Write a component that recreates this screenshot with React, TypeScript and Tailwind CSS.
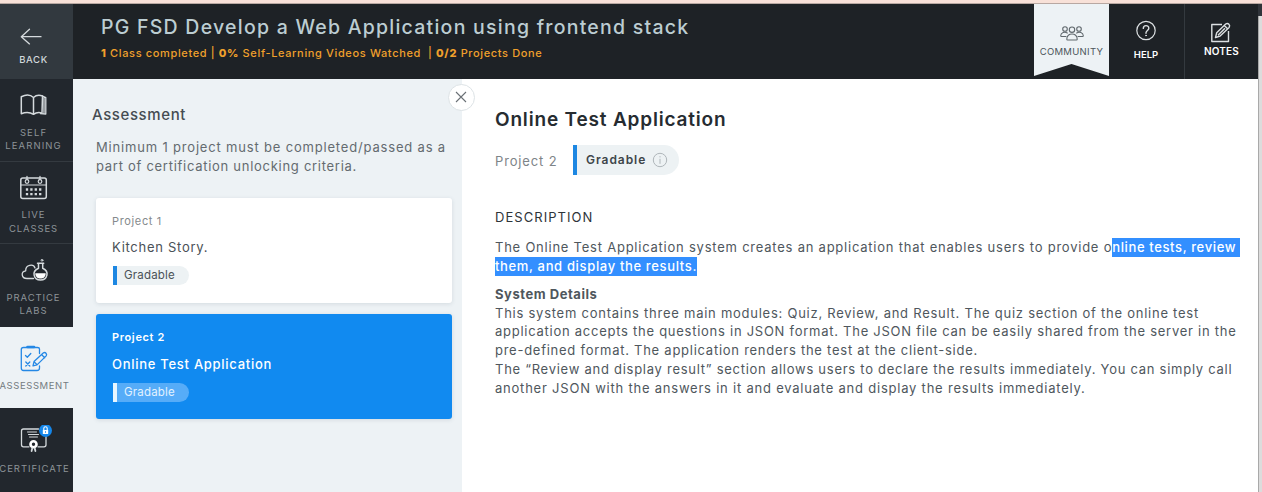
import type { ReactNode } from "react";

function NavIcon({ box, children, className = "text-[#d5dadd]" }: { box: string; children: ReactNode; className?: string }) {
  return (
    <svg viewBox={box} className={`ml-[17px] block h-7 w-9 shrink-0 self-start ${className}`} fill="none" stroke="currentColor" strokeWidth="1.3" strokeLinecap="round" strokeLinejoin="round">
      {children}
    </svg>
  );
}

function Sidebar() {
  const item = "flex w-[73px] shrink-0 flex-col";
  const label = "w-[67px] text-center text-[9.5px] text-[#8d9498]";
  return (
    <nav className="flex w-[73px] shrink-0 flex-col bg-[#22272d]">
      <div className={`${item} h-[75px] bg-[#32393f] pt-[19px]`}>
        <NavIcon box="17 23 36 28">
          <path d="M21.5 36.7H41M29.5 29.3L21.3 36.7l8.2 7.2" />
        </NavIcon>
        <span className="mt-0.5 w-[67px] text-center text-[9.5px] leading-[13px] font-medium tracking-[0.6px] text-[#d3dadd]">BACK</span>
      </div>
      <div className={`${item} h-[83px] border-b border-[#343a40] pt-3`}>
        <NavIcon box="17 91 36 28">
          <path d="M33.500 97.500c-3-2.800-8-2.800-12.200-.8v17c4-1.500 8.700-1.500 12.200.6 3-2.100 5.500-2.100 8.500-1.200M33.500 97.500c2.500-2.300 5.500-2.700 9-1.500l-.5 17M33.500 97.500v16.800" strokeWidth="1.500" />
          <path d="M42.500 96l3.300 1.700v16.300l-5.300-.3M44 97v15.500" />
        </NavIcon>
        <span className={`${label} mt-[7px] leading-[13px] tracking-[1.1px]`}>SELF<br />LEARNING</span>
      </div>
      <div className={`${item} h-[82px] border-b border-[#343a40] pt-3`}>
        <NavIcon box="17 174 36 28">
          <rect x="20.800" y="178" width="25.500" height="20.500" rx="2" strokeWidth="1.500" />
          <path d="M21 185h25" strokeWidth="1" />
          <path d="M27 176.500v3M40 176.500v3" />
          <circle cx="27" cy="181.500" r="1.800" strokeWidth="1.200" />
          <circle cx="40" cy="181.500" r="1.800" strokeWidth="1.200" />
          <path d="M27 189.500h.01M31.400 189.500h.01M35.800 189.500h.01M40.200 189.500h.01M27 194.200h.01M31.400 194.200h.01M35.800 194.200h.01M40.200 194.200h.01" strokeWidth="2.300" strokeLinecap="square" />
        </NavIcon>
        <span className={`${label} mt-1.5 leading-[14px] tracking-[0.9px]`}>LIVE<br />CLASSES</span>
      </div>
      <div className={`${item} h-[83px] pt-[11px]`}>
        <NavIcon box="17 255 36 28">
          <path d="M33.500 278.500h-6.500c-6 0-6.300-7-1.300-7.700C25.500 264.500 33.500 263.500 35 268" />
          <path d="M37.500 263.200h6.200M38.500 263.500v4.700c-7.500 3.300-4.700 11.800 2 11.800s9.500-8.500 2.200-11.800v-4.700" strokeWidth="1.500" />
          <path d="M35.300 273.200h10.400c.3 7.200-10.700 7.200-10.400 0z" fill="#fff" stroke="none" />
          <circle cx="42" cy="260.300" r=".9" strokeWidth="1" />
        </NavIcon>
        <span className={`${label} mt-2 leading-[13px] tracking-[0.9px]`}>PRACTICE<br />LABS</span>
      </div>
      <div className={`${item} h-[81px] bg-[#edf2f5] pt-[17px]`}>
        <NavIcon box="17 344 36 28" className="text-[#2488e5]">
          <path d="M39.500 353.500v-4.500q0-1.500-2-1.500H23.500q-2.200 0-2.200 2v18.500q0 2.500 2.200 2.500h13.500q2.500 0 2.500-2.500v-2" />
          <path d="M27.500 347h6.500" strokeWidth="2.600" />
          <path d="M25.500 355.500l1.800 1.800 3.500-3.800M25.800 362l4 4M29.800 362l-4 4" />
          <path d="M33 365.800l1-4.200 9.500-8.800q1.400-.8 2.500.4t.2 2.700l-9.200 9-4 .9zM41.500 354.500l3.200 3.200M34 361.600l3 3.200" />
        </NavIcon>
        <span className="-ml-[2px] w-[73px] shrink-0 pt-[7px] text-center text-[9.5px] leading-[13px] tracking-[0.6px] whitespace-nowrap text-[#747c81]">ASSESSMENT</span>
      </div>
      <div className={`${item} grow pt-[17px]`}>
        <NavIcon box="17 425 36 28">
          <path d="M29 446.800h-5.500q-2 0-2-2V431q0-2 2-2h15M46 436.500v8.300q0 2-2 2h-6" />
          <path d="M27.500 432h9M28.500 434.500h10M29.500 437h8" strokeWidth="1" />
          <circle cx="33.500" cy="444.300" r="3" fill="#22272d" strokeWidth="2.600" stroke="#fff" />
          <path d="M32.200 448.500l-.6 2.500M34.800 448.500l.6 2.500" strokeWidth="1.800" />
          <circle cx="45.500" cy="430.500" r="6.500" fill="#1587ea" stroke="none" />
          <rect x="42.800" y="430" width="5.400" height="4" rx=".5" fill="#fff" stroke="none" />
          <path d="M43.800 430v-1.500q0-1.700 1.700-1.700t1.700 1.700v1.500" stroke="#fff" strokeWidth="1.100" />
          <path d="M45.500 431.500v1" stroke="#1587ea" strokeWidth=".8" />
        </NavIcon>
        <span className="-ml-[2px] w-[73px] shrink-0 pt-[9px] text-center text-[9.5px] leading-[13px] tracking-[0.95px] whitespace-nowrap text-[#8d9498]">CERTIFICATE</span>
      </div>
    </nav>
  );
}

function Header() {
  return (
    <header className="flex h-[75px] shrink-0 bg-[#1e2226]">
      <div className="grow pl-7 whitespace-nowrap">
        <h1 className="pt-[9px] text-[19.5px] leading-[28px] font-medium tracking-[1.24px] text-[#bccdd2]">PG FSD Develop a Web Application using frontend stack</h1>
        <p className="mt-1 text-[11px] leading-4 font-medium tracking-[0.64px] whitespace-pre text-[#f0a02c]">
          <b className="font-extrabold">1</b> Class completed | <b className="font-extrabold">0%</b> Self-Learning Videos Watched{"  "}| <b className="font-extrabold">0/2</b> Projects Done
        </p>
      </div>
      <div className="flex h-[72px] w-[75px] shrink-0 flex-col items-center bg-[#edf2f5] pt-5 [clip-path:polygon(0_0,100%_0,100%_100%,50%_60px,0_100%)]">
        <svg viewBox="0 0 24 18" className="h-[18px] w-6 shrink-0" fill="none" stroke="#60686d" strokeWidth="1.1">
          <circle cx="5" cy="5" r="2.300" />
          <circle cx="19" cy="5" r="2.300" />
          <circle cx="12" cy="5.700" r="2.700" />
          <path d="M6.800 15.200c-.3-7 10.700-7 10.400 0q0 .8-.8.8H7.600q-.8 0-.8-.8zM6.300 12.500H1.500q-.8 0-.8-.8c.1-3.300 4-4.500 7-2.500M17.700 12.500h4.800q.8 0 .8-.8c-.1-3.300-4-4.500-7-2.500" />
        </svg>
        <span className="mt-[3px] text-[9.5px] leading-[13px] tracking-[0.3px] text-[#4c555b]">COMMUNITY</span>
      </div>
      <div className="flex w-[76px] shrink-0 flex-col items-center border-r border-[#343a3f] pr-px pt-4 text-white">
        <svg viewBox="0 0 22 22" className="h-[22px] w-[22px] shrink-0" fill="none" stroke="#dce0e2" strokeWidth="1.2" strokeLinecap="round">
          <circle cx="11" cy="10.500" r="9.200" />
          <path d="M8.300 8.400c0-3.700 5.500-3.600 5.500-.2 0 2.200-2.800 2.300-2.800 4.500v.5" strokeWidth="1.400" />
          <circle cx="11" cy="15.500" r=".5" fill="#dce0e2" strokeWidth=".8" />
        </svg>
        <span className="mt-1.5 text-[9.5px] leading-[13px] font-semibold">HELP</span>
      </div>
      <div className="flex w-[73px] shrink-0 flex-col items-center pt-[17px] text-white">
        <svg viewBox="0 0 22 22" className="mr-[2px] h-[22px] w-[22px] shrink-0" fill="none" stroke="#dce0e2" strokeWidth="1.400" strokeLinejoin="round">
          <path d="M12 3.500H1.800v17H18.500V10" />
          <path d="M5.500 16.500l1.200-4.800 9-8.700q1.800-1.200 3.200.2t.2 3.200l-9 8.700-4.600 1.400zM14.300 4.500l3.500 3.600M8 14.300l7-7" />
        </svg>
        <span className="mt-[2px] text-[10px] leading-[13px] font-semibold tracking-[0.2px]">NOTES</span>
      </div>
    </header>
  );
}

function ProjectCard({ number, title, active = false }: { number: number; title: string; active?: boolean }) {
  return (
    <article className={`flex h-[105px] w-[356px] flex-col items-start rounded-[3px] pl-4 whitespace-nowrap shadow-[0_1px_4px_rgba(60,80,100,0.14)] ${active ? "bg-[#118af0] text-white" : "bg-white text-[#4a5157]"}`}>
      <span className={`mt-[15px] text-[11px] leading-4 tracking-[0.65px] ${active ? "font-semibold" : "text-[#858a8d]"}`}>Project {number}</span>
      <h3 className={`text-[13px] leading-5 tracking-[0.72px] ${active ? "mt-[9px] font-medium" : "mt-2"}`}>{title}</h3>
      <span className={`ml-px mt-[9px] flex h-[19px] w-[76px] items-center rounded-r-full border-l-4 pl-[7px] text-[11.5px] tracking-[0.2px] ${active ? "border-[#e8f6ff] bg-[#56acf8] text-[#e3f2ff]" : "border-[#1d87e2] bg-[#edf2f4]"}`}>Gradable</span>
    </article>
  );
}

function AssessmentPanel() {
  return (
    <aside className="w-[389px] shrink-0 bg-[#edf2f5] pl-[23px] whitespace-nowrap">
      <div className="relative">
        <button aria-label="Close" className="absolute top-[5px] left-[352px] flex size-[27px] items-center justify-center rounded-full border border-[#dde3e6] bg-white">
          <svg viewBox="0 0 12 12" className="mr-px mb-px size-3" stroke="#6a7075" strokeWidth="1.100"><path d="M1 1l10 10M11 1L1 11" /></svg>
        </button>
      </div>
      <h2 className="-ml-1 pt-[25px] text-[15px] leading-[22px] font-medium tracking-[0.6px] text-[#454c52]">Assessment</h2>
      <p className="mt-3 text-[13px] leading-[19px] text-[#646b70]">
        <span className="block tracking-[0.82px]">Minimum 1 project must be completed/passed as a</span>
        <span className="block tracking-[0.72px]">part of certification unlocking criteria.</span>
      </p>
      <div className="mt-[22px] flex flex-col gap-[11px]">
        <ProjectCard number={1} title="Kitchen Story." />
        <ProjectCard number={2} title="Online Test Application" active />
      </div>
    </aside>
  );
}

function Details() {
  return (
    <main className="grow bg-white pl-[33px] text-[13px] leading-[18.8px] whitespace-nowrap text-[#4f575d]">
      <h2 className="pt-[27px] text-[19px] leading-7 font-semibold tracking-[0.82px] text-[#262c31]">Online Test Application</h2>
      <div className="mt-[11px] flex h-[30px] items-center">
        <span className="w-[78px] pt-0.5 tracking-[0.85px] text-[#7e8488]">Project 2</span>
        <span className="flex h-[30px] w-[106px] items-center rounded-r-full border-l-4 border-[#1d87e2] bg-[#edf2f4] pl-[9px] text-[12px] font-semibold tracking-[0.95px] text-[#3e454a]">
          Gradable
          <svg viewBox="0 0 16 16" className="ml-1.5 size-4" fill="none" stroke="#afb6ba" strokeWidth="1">
            <circle cx="8" cy="8" r="6.700" />
            <path d="M8 6.800v5M8 4.200v1.200" />
          </svg>
        </span>
      </div>
      <h3 className="mt-[33px] tracking-[1.05px] text-[#2e3439]">DESCRIPTION</h3>
      <p className="mt-[11px] leading-[19px]">
        <span className="block whitespace-pre"><span className="tracking-[0.769px]">The Online Test Application system creates an application that enables users to provide o</span><span className="inline-block bg-[#338fff] font-medium tracking-[0.63px] text-white">nline tests, review </span></span>
        <span className="block w-fit bg-[#338fff] font-medium tracking-[0.651px] text-white">them, and display the results.</span>
      </p>
      <h4 className="mt-[9px] font-bold tracking-[0.54px]">System Details</h4>
      <p>
        <span className="block tracking-[0.747px]">This system contains three main modules: Quiz, Review, and Result. The quiz section of the online test</span>
        <span className="block tracking-[0.738px]">application accepts the questions in JSON format. The JSON file can be easily shared from the server in the</span>
        <span className="block tracking-[0.741px]">pre-defined format. The application renders the test at the client-side.</span>
        <span className="block tracking-[0.734px]">The “Review and display result” section allows users to declare the results immediately. You can simply call</span>
        <span className="block tracking-[0.78px]">another JSON with the answers in it and evaluate and display the results immediately.</span>
      </p>
    </main>
  );
}

export default function App() {
  return (
    <div className="flex h-[492px] w-[1262px] flex-col overflow-hidden bg-white font-['Inter','Liberation_Sans',sans-serif]">
      <div className="h-1 shrink-0 border-b border-[#b8a8a2] bg-[#f8e1d8]" />
      <div className="flex min-h-0 grow">
        <Sidebar />
        <div className="flex w-[1185px] shrink-0 flex-col">
          <Header />
          <div className="flex min-h-0 grow">
            <AssessmentPanel />
            <Details />
          </div>
        </div>
        <div className="w-1 shrink-0 border-l border-[#a9a9a9] bg-[#dcdcdc]">
          <div className="-ml-px h-3 w-1 bg-[#30343a]" />
        </div>
      </div>
    </div>
  );
}
